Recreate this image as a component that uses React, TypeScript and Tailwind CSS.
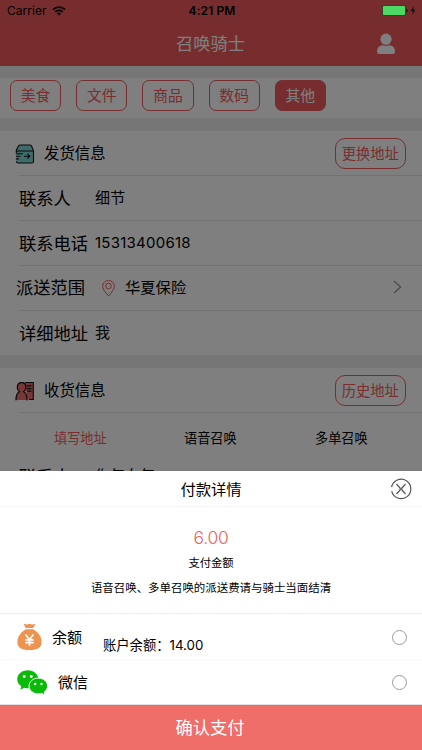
import type { ReactNode } from "react";

const categories = ["美食", "文件", "商品", "数码", "其他"];

function StatusBar() {
  return (
    <div className="absolute inset-x-0 top-0 z-30 flex h-5 items-center justify-between pt-[2px] pr-[5px] pl-[7px] text-[12px] text-black">
      <div className="flex w-[120px] items-center gap-[5px]">
        <span className="tracking-[0.05px]">Carrier</span>
        <svg width="14" height="10" viewBox="0 0 14 10" fill="none" stroke="currentColor" strokeWidth="1.7">
          <path d="M1 3.6a8.5 8.5 0 0 1 12 0M3.2 5.9a5.4 5.4 0 0 1 7.6 0" />
          <path d="M7 9.6 4.9 7.5a3 3 0 0 1 4.2 0Z" fill="currentColor" stroke="none" />
        </svg>
      </div>
      <span className="font-semibold tracking-[0.1px]">4:21 PM</span>
      <div className="flex w-[120px] items-center justify-end">
        <svg width="35" height="12" viewBox="0 0 35 12">
          <rect x="0.5" y="0.5" width="23" height="10" rx="1.5" fill="#4cd964" stroke="#1f2a20" strokeWidth="0.7" />
          <path d="M24.4 3.7c1.7.5 1.7 3.2 0 3.7Z" fill="#111" />
          <path d="M32 1 28.6 6h2.2l-.9 4L33.500 4.800h-2.200Z" fill="#111" />
        </svg>
      </div>
    </div>
  );
}

function BoxIcon() {
  return (
    <svg width="20" height="20" viewBox="0 0 20 20" fill="none" stroke="#111" strokeWidth="1.100" strokeLinecap="round">
      <path d="M1.500 7 3.500 2Q4 1 5.500 1h9Q16 1 16.500 2l2 5v10.500q0 1.500-1.500 1.500H3q-1.500 0-1.500-1.500Z" fill="#7fd8d6" stroke="none" />
      <path d="M1.300 8.500V6.500L3.500 2Q4 1 5.500 1h9Q16 1 16.500 2l2 4.500v11q0 1.500-1.500 1.500H3q-1.500 0-1.700-1.500M1.300 7h17.200M1.300 9.700h6.200M1.300 12.300h3.700M1.300 14.900h2.200M9.500 12.300h5M12.700 10.200l2.100 2.100-2.100 2.100" />
    </svg>
  );
}

function ContactIcon() {
  return (
    <svg width="20" height="20" viewBox="0 0 20 20" stroke="#111" strokeWidth="1.100" strokeLinecap="round">
      <path d="M9.500 1.500H18.300v17H13" fill="#ea6d6b" stroke="none" />
      <path d="M10.500 1.500h7.800v17H14.500" fill="none" />
      <path d="M1 19q0-6.500 3.500-8.200A5 5 0 0 1 2.300 6.500q0-5 4.300-5t4.300 5a5 5 0 0 1-2.200 4.300Q12 12.500 12 19Z" fill="#f0716f" stroke="none" />
      <path d="M1 18.800q0-6.300 3.500-8A5 5 0 0 1 2.300 6.500q0-5 4.300-5t4.300 5a5 5 0 0 1-2.200 4.300Q12 12.500 12 18.800M12.500 4.800h3.500M12.500 7.500h3.500M12.800 10.200h3.200" fill="none" strokeWidth="1.250" />
    </svg>
  );
}

function SectionHeader({ icon, title, action }: { icon: ReactNode; title: string; action: string }) {
  return (
    <div className="flex h-11 items-center pt-px pr-4 pl-[15px]">
      {icon}
      <h2 className="ml-[9px] flex-1 text-[15.400px]">{title}</h2>
      <button className="h-[31px] w-[71.500px] rounded-[10px] border border-[#f15a5c] text-[14.300px] whitespace-nowrap text-[#f15a5c]">
        {action}
      </button>
    </div>
  );
}

function InfoRow({ label, value }: { label: string; value: string }) {
  return (
    <div className="ml-[19px] flex h-[45px] items-center border-t border-[#e2e2e6] pt-px">
      <span className="w-[76px] text-[17.300px] whitespace-nowrap">{label}</span>
      <span className="text-[15px] tracking-[0.250px]">{value}</span>
    </div>
  );
}

function RangeRow() {
  return (
    <div className="relative flex h-[45px] items-center pt-px pr-5 pl-4">
      <div className="absolute top-0 right-0 left-[19px] border-t border-[#e2e2e6]" />
      <span className="w-[86px] text-[17.300px] whitespace-nowrap">派送范围</span>
      <svg width="13" height="17" viewBox="0 0 13 17" fill="none" stroke="#f15a5c" strokeWidth="1">
        <path d="M6.500 16Q.6 9.500.6 6.200a5.900 5.700 0 0 1 11.800 0q0 3.300-5.900 9.800Z" />
        <circle cx="6.500" cy="6" r="2.800" />
      </svg>
      <span className="ml-[10px] flex-1 text-[15.300px]">华夏保险</span>
      <svg className="-mt-[2px]" width="9" height="14" viewBox="0 0 9 14" fill="none" stroke="#a0a0a4" strokeWidth="1.600">
        <path d="m1 1 6.500 6L1 13" />
      </svg>
    </div>
  );
}

function OrderPage() {
  return (
    <div className="bg-[#ededed]">
      <header className="grid h-[66px] grid-cols-[1fr_auto_1fr] items-center bg-[#ee5a5c] pt-[21px] text-white">
        <h1 className="col-start-2 mr-px text-[17.300px] whitespace-nowrap">召唤骑士</h1>
        <svg className="mr-[26px] justify-self-end" width="20" height="22" viewBox="0 0 20 22" fill="currentColor">
          <circle cx="10" cy="6.200" r="5.600" />
          <path d="M1 18.500q0-6 6-6.300 3 1 6 0 6 .3 6 6.300 0 2.500-2 2.500H3q-2 0-2-2.500Z" />
        </svg>
      </header>
      <nav className="mt-3 flex h-10 gap-[15px] bg-white pt-[2px] pl-[10px]">
        {categories.map((c, i) => (
          <button
            key={c}
            className={
              "h-[31px] w-[51.200px] rounded-[7px] border border-[#f15a5c] pt-[2px] text-[14.800px] " +
              (i === 4 ? "bg-[#ee5a5c] text-white" : "text-[#f15a5c]")
            }
          >
            {c}
          </button>
        ))}
      </nav>
      <section className="mt-[13px] bg-white">
        <SectionHeader icon={<BoxIcon />} title="发货信息" action="更换地址" />
        <InfoRow label="联系人" value="细节" />
        <InfoRow label="联系电话" value="15313400618" />
        <RangeRow />
        <InfoRow label="详细地址" value="我" />
      </section>
      <section className="mt-[13px] bg-white">
        <SectionHeader icon={<ContactIcon />} title="收货信息" action="历史地址" />
        <div className="ml-[19px] flex h-[42px] items-center border-t border-[#e2e2e6] pt-[10px] text-[13.200px]">
          <span className="ml-[35px] w-[130px] text-[#f15a5c]">填写地址</span>
          <span className="w-[131px]">语音召唤</span>
          <span>多单召唤</span>
        </div>
        <div className="ml-[19px] flex h-[45px] items-center">
          <span className="w-[76px] text-[17.300px]">联系人</span>
          <span className="text-[15px]">你年女年</span>
        </div>
      </section>
    </div>
  );
}

function MoneyBag() {
  return (
    <svg width="25" height="28" viewBox="0 0 25 28">
      <path d="M6.500.8q3 1.200 6 0 3 1.200 6 0L16.300 5H8.700Z" fill="#ef9350" />
      <path d="M8.700 6.200h7.600C21 9 24.600 13.500 24.600 19c0 5.500-3.600 8-12.100 8S.4 24.500.4 19C.4 13.500 4 9 8.700 6.200Z" fill="#ef9350" />
      <path d="m8.500 11.500 4 5.200 4-5.200M12.500 16.500v6.200M8.300 16.800h8.400M8.300 19.600h8.400" fill="none" stroke="#fff" strokeWidth="1.700" />
    </svg>
  );
}

function WeChat() {
  return (
    <svg width="31" height="25" viewBox="0 0 31 25">
      <path d="M10.800.2c6 0 10.600 4 10.600 9s-4.600 9-10.600 9q-1.800 0-3.500-.5l-4 2.100 1-3.600C1.800 14.500.2 12 .2 9.200c0-5 4.600-9 10.600-9Z" fill="#09bb07" />
      <path d="M21.300 8.100c5.200 0 9.300 3.500 9.300 7.900 0 2.300-1.300 4.400-3.300 5.900l.9 3-3.700-1.500q-1.500.5-3.200.5c-5.200 0-9.300-3.500-9.300-7.900s4.100-7.900 9.300-7.900Z" fill="#09bb07" stroke="#fff" strokeWidth="1" />
      <g fill="#fff">
        <circle cx="7.200" cy="6.500" r="1.400" />
        <circle cx="14.300" cy="6.500" r="1.400" />
        <circle cx="18.200" cy="14" r="1.200" />
        <circle cx="24.500" cy="14" r="1.200" />
      </g>
    </svg>
  );
}

function Radio() {
  return <span className="ml-auto size-[15px] rounded-full border border-[#9b9b9b]" />;
}

function PaymentSheet() {
  return (
    <div className="absolute inset-x-0 bottom-0 z-20 flex h-[279px] flex-col bg-white">
      <div className="relative flex h-9 items-center justify-center border-b border-[#f5f5f5]">
        <h2 className="pt-[3px] text-[15.300px]">付款详情</h2>
        <svg className="absolute top-[7px] right-[10px]" width="22" height="22" viewBox="0 0 22 22" fill="none" stroke="#555" strokeWidth="1.200">
          <path d="M1.600 9.200A9.700 9.700 0 1 1 1.700 13.200" />
          <path d="m6.500 6 3.600 4v2L6.500 16M15.500 6 11.900 10v2l3.600 4M10.100 11h1.800" />
        </svg>
      </div>
      <div className="flex h-[107px] flex-col items-center border-b border-[#f0f0f0] pt-[20px]">
        <span className="text-[17.500px] leading-[22px] font-light tracking-[-0.300px] text-[#f0605c]">6.00</span>
        <span className="mt-[6px] text-[11.300px] leading-[16px]">支付金额</span>
        <span className="mt-[9px] text-[11.450px] leading-[16px] whitespace-nowrap">语音召唤、多单召唤的派送费请与骑士当面结清</span>
      </div>
      <div className="flex h-[46px] items-center border-b border-[#fafafa] pt-px pr-[15px] pl-[17px]">
        <MoneyBag />
        <span className="mt-[2px] ml-[10px] text-[15px]">余额</span>
        <span className="mt-[17px] ml-[21px] text-[13.300px]">账户余额：14.00</span>
        <Radio />
      </div>
      <div className="flex h-[45px] items-center border-b border-[#e5dede] pr-[15px] pl-[17px]">
        <WeChat />
        <span className="mt-[2px] ml-[10px] text-[15px]">微信</span>
        <Radio />
      </div>
      <button className="flex-1 bg-[#f06e69] pr-[2px] text-[17.300px] text-white">确认支付</button>
    </div>
  );
}

export default function App() {
  return (
    <main className="relative h-[750px] w-[422px] overflow-hidden font-['Inter','Noto_Sans_CJK_SC',sans-serif] text-black">
      <OrderPage />
      <div className="absolute inset-0 z-10 bg-black/50" />
      <StatusBar />
      <PaymentSheet />
    </main>
  );
}
